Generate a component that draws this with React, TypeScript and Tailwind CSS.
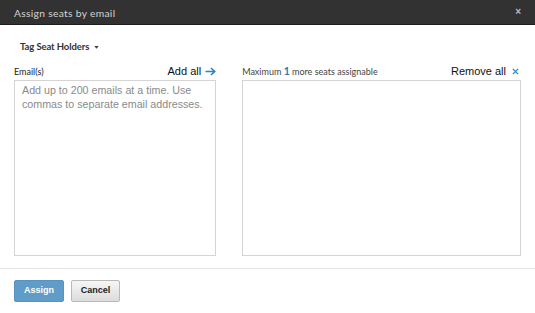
import React from "react";

export default function App() {
  return (
    <div className="w-[535px] h-[313px] bg-white flex flex-col overflow-hidden">
      <div className="h-[25px] bg-[#323232] border-b border-[#1c1c1c] flex items-center justify-between pl-[14px] pr-[14px] shrink-0">
        <span className="text-[10.3px] tracking-[0.3px] text-[#d2d2d2] font-['Lato',sans-serif] leading-none mt-[3px]">
          Assign seats by email
        </span>
        <span className="text-[#bbbbbb] text-[10px] leading-none font-['Liberation_Sans',sans-serif] font-bold">×</span>
      </div>
      <div className="flex items-center h-[20px] mt-[12px] pl-[20px] font-['Lato',sans-serif] text-[9.5px] tracking-[-0.1px] font-bold text-[#333]">
        Tag Seat Holders
        <svg width="5" height="3" viewBox="0 0 6 4" className="ml-[5px] mt-[1px]">
          <path d="M0 0 L6 0 L3 3.5 Z" fill="#444" />
        </svg>
      </div>
      <div className="flex px-[14px] mt-[5px] gap-[26px]">
        <div className="w-[203px] flex flex-col">
          <div className="flex items-end justify-between h-[15px] mb-[3px]">
            <span className="text-[9px] text-[#222] font-['Lato',sans-serif] leading-none mb-[1px]">Email(s)</span>
            <span className="flex items-center text-[11px] text-[#111] font-['Liberation_Sans',sans-serif] leading-none">
              Add all
              <svg width="11" height="9" viewBox="0 0 11 9" className="ml-[4px]">
                <path d="M0.5 4.5 H9.5 M6 1 L9.7 4.5 L6 8" stroke="#2a86c0" strokeWidth="1.6" fill="none" />
              </svg>
            </span>
          </div>
          <div className="h-[176px] border border-[#d4d4d4] px-[7px] pt-[2px] text-[10.7px] leading-[14px] text-[#8a8a8a] font-['Liberation_Sans',sans-serif]">
            Add up to 200 emails at a time. Use commas to separate email addresses.
          </div>
        </div>
        <div className="w-[280px] flex flex-col">
          <div className="flex items-end justify-between h-[15px] mb-[3px]">
            <span className="text-[9px] text-[#444] font-['Lato',sans-serif] leading-none mb-[1px]">
              Maximum <span className="text-[#2a78b0] font-bold text-[10.5px]">1</span> more seats assignable
            </span>
            <span className="flex items-center text-[11px] text-[#111] font-['Liberation_Sans',sans-serif] leading-none">
              Remove all
              <svg width="7" height="7" viewBox="0 0 8 8" className="ml-[6px] mr-[2px]">
                <path d="M1 1 L7 7 M7 1 L1 7" stroke="#2a86c0" strokeWidth="1.5" />
              </svg>
            </span>
          </div>
          <div className="h-[176px] border border-[#d4d4d4]" />
        </div>
      </div>
      <div className="mt-[12px] border-t border-[#e2e2e2]" />
      <div className="flex gap-[7px] pl-[14px] mt-[11px]">
        <button className="w-[50px] h-[22px] rounded-[2px] bg-[#5f9cc8] border border-[#5a93bd] text-white text-[9px] font-bold font-['Liberation_Sans',sans-serif]">
          Assign
        </button>
        <button className="w-[49px] h-[22px] rounded-[2px] bg-gradient-to-b from-[#f6f6f6] to-[#dcdcdc] border border-[#b9b9b9] text-[#222] text-[9px] font-bold font-['Liberation_Sans',sans-serif]">
          Cancel
        </button>
      </div>
    </div>
  );
}
